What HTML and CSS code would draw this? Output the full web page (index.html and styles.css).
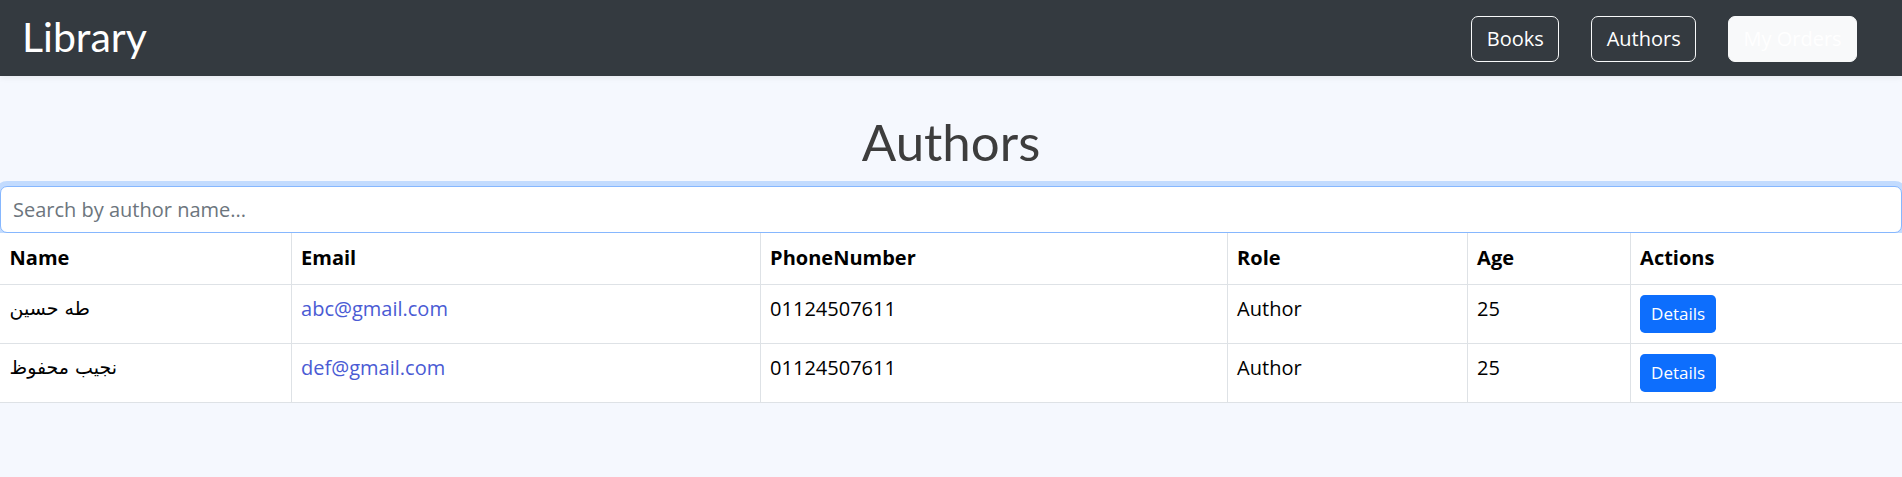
FILE: index.html
```html
<!DOCTYPE html>
<html lang="en">
<head>
<meta charset="utf-8">
<title>Library</title>
<link rel="stylesheet" href="styles.css">
</head>
<body>
<nav class="navbar">
  <a class="brand" href="#">Library</a>
  <div class="nav-actions">
    <a class="btn btn-outline" href="#">Books</a>
    <a class="btn btn-outline" href="#">Authors</a>
    <a class="btn btn-light" href="#">My Orders</a>
  </div>
</nav>
<main class="content">
  <h1 class="title">Authors</h1>
  <input class="search" type="text" placeholder="Search by author name...">
  <table class="authors">
    <colgroup>
      <col class="c-name"><col class="c-email"><col class="c-phone"><col class="c-role"><col class="c-age"><col class="c-actions">
    </colgroup>
    <thead>
      <tr><th>Name</th><th>Email</th><th>PhoneNumber</th><th>Role</th><th>Age</th><th>Actions</th></tr>
    </thead>
    <tbody>
      <tr>
        <td class="ar">طه حسين</td>
        <td><a class="mail" href="#">abc@gmail.com</a></td>
        <td>01124507611</td>
        <td>Author</td>
        <td>25</td>
        <td><a class="btn-details" href="#">Details</a></td>
      </tr>
      <tr>
        <td class="ar">نجيب محفوظ</td>
        <td><a class="mail" href="#">def@gmail.com</a></td>
        <td>01124507611</td>
        <td>Author</td>
        <td>25</td>
        <td><a class="btn-details" href="#">Details</a></td>
      </tr>
    </tbody>
  </table>
</main>
</body>
</html>
```
FILE: styles.css
```css
* { box-sizing: border-box; }
html, body { margin: 0; padding: 0; }
body {
  background: #f5f8fe;
  font-family: "Open Sans", "Liberation Sans", sans-serif;
  font-size: 20px;
  line-height: 1.5;
  color: #212529;
}
.navbar {
  height: 76px;
  background: #343a40;
  display: flex;
  align-items: center;
  justify-content: space-between;
  padding: 0 45px 0 22px;
  box-shadow: 0 2px 6px rgba(0,0,0,0.06);
  position: relative;
}
.brand {
  font-family: Lato, "Noto Sans", sans-serif;
  font-size: 41px;
  color: #fff;
  text-decoration: none;
  line-height: 1;
  margin-top: -3px;
}
.nav-actions {
  display: flex;
  gap: 32px;
  align-items: center;
  margin-top: 2px;
}
.btn {
  display: inline-block;
  font-size: 20px;
  line-height: 30px;
  padding: 7px 14.4px;
  border: 1.2px solid #f8f9fa;
  border-radius: 7px;
  color: #fff;
  text-decoration: none;
}
.btn-light {
  background: #f8f9fa;
  color: #fff;
  padding: 7px 14.4px;
}
.content { padding: 0; }
.title {
  font-family: Lato, "Noto Sans", sans-serif;
  font-weight: 400;
  font-size: 51px;
  line-height: 61px;
  color: #3d3d3d;
  text-align: center;
  margin: 0;
  padding: 35px 0 11px;
}
.search {
  display: block;
  width: 100%;
  height: 47px;
  margin: 3px 0 0;
  font-family: "Open Sans", "Liberation Sans", sans-serif;
  font-size: 20px;
  padding: 7px 12px;
  color: #212529;
  background: #fff;
  border: 1.2px solid #86b7fe;
  border-radius: 7px;
  box-shadow: 0 0 0 5px #c2dbfe;
  outline: none;
}
.search::placeholder { color: #6c757d; }
.authors {
  width: 100%;
  border-collapse: collapse;
  table-layout: fixed;
  background: #fff;
  position: relative;
}
.c-name { width: 291px; }
.c-email { width: 469px; }
.c-phone { width: 467px; }
.c-role { width: 240px; }
.c-age { width: 163px; }
.c-actions { width: auto; }
.authors th, .authors td {
  text-align: left;
  vertical-align: top;
  padding: 9.6px 9.6px;
  border: 1px solid #dee2e6;
  border-top: 0;
}
.authors th:first-child, .authors td:first-child { border-left: 0; }
.authors th:last-child, .authors td:last-child { border-right: 0; }
.authors th {
  font-weight: 700;
  color: #000;
  height: 51px;
}
.authors td { height: 59px; color: #000; }
.authors td.ar {
  font-family: "DejaVu Sans", "Liberation Sans", sans-serif;
  font-size: 19px;
  line-height: 28px;
}
.mail { color: #4a5bd4; text-decoration: none; }
.btn-details {
  display: inline-block;
  background: #0d6efd;
  color: #fff;
  font-size: 17px;
  line-height: 26px;
  padding: 6px 11px;
  border-radius: 4.8px;
  text-decoration: none;
  margin-top: 1px;
}
```
